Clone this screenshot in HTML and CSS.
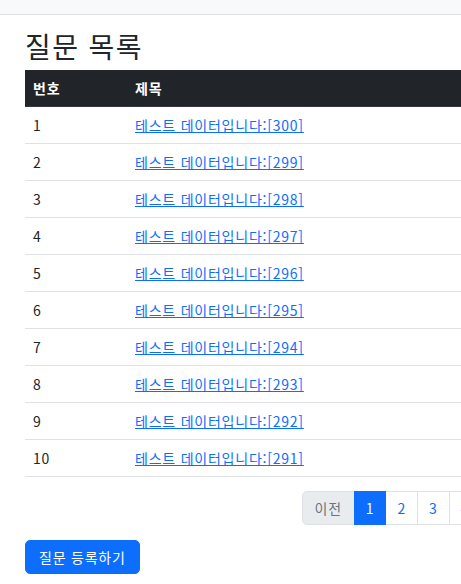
FILE: index.html
```html
<!DOCTYPE html>
<html lang="ko">
<head>
<meta charset="utf-8">
<title>질문 목록</title>
<link rel="stylesheet" href="styles.css">
</head>
<body>
<nav class="topbar"></nav>
<div class="container">
  <h2 class="title">질문 목록</h2>
  <table class="qtable">
    <thead>
      <tr><th class="col-no">번호</th><th class="col-subject">제목</th><th class="col-date">작성일시</th></tr>
    </thead>
    <tbody>
      <tr><td>1</td><td><a href="#">테스트 데이터입니다:[300]</a></td><td>2023-01-01</td></tr>
      <tr><td>2</td><td><a href="#">테스트 데이터입니다:[299]</a></td><td>2023-01-01</td></tr>
      <tr><td>3</td><td><a href="#">테스트 데이터입니다:[298]</a></td><td>2023-01-01</td></tr>
      <tr><td>4</td><td><a href="#">테스트 데이터입니다:[297]</a></td><td>2023-01-01</td></tr>
      <tr><td>5</td><td><a href="#">테스트 데이터입니다:[296]</a></td><td>2023-01-01</td></tr>
      <tr><td>6</td><td><a href="#">테스트 데이터입니다:[295]</a></td><td>2023-01-01</td></tr>
      <tr><td>7</td><td><a href="#">테스트 데이터입니다:[294]</a></td><td>2023-01-01</td></tr>
      <tr><td>8</td><td><a href="#">테스트 데이터입니다:[293]</a></td><td>2023-01-01</td></tr>
      <tr><td>9</td><td><a href="#">테스트 데이터입니다:[292]</a></td><td>2023-01-01</td></tr>
      <tr><td>10</td><td><a href="#">테스트 데이터입니다:[291]</a></td><td>2023-01-01</td></tr>
    </tbody>
  </table>
  <ul class="pagination">
    <li class="page-item disabled"><span class="page-link">이전</span></li>
    <li class="page-item active"><span class="page-link">1</span></li>
    <li class="page-item"><a class="page-link" href="#">2</a></li>
    <li class="page-item"><a class="page-link" href="#">3</a></li>
    <li class="page-item"><a class="page-link" href="#">4</a></li>
    <li class="page-item"><a class="page-link" href="#">5</a></li>
    <li class="page-item"><a class="page-link" href="#">6</a></li>
    <li class="page-item"><a class="page-link" href="#">다음</a></li>
  </ul>
  <a href="#" class="btn-primary">질문 등록하기</a>
</div>
</body>
</html>
```

FILE: styles.css
```css
html, body {
  overflow: hidden;
}
body {
  margin: 0;
  font-family: "Noto Sans CJK KR", "Noto Sans", sans-serif;
  font-size: 14px;
  line-height: 21px;
  letter-spacing: 0.055em;
  color: #212529;
  background: #fff;
}
.topbar {
  height: 14px;
  background: #f8f9fa;
  border-bottom: 1px solid #dee2e6;
}
.container {
  width: 846px;
  margin-left: 25px;
  padding-top: 14px;
}
.title {
  margin: 0 0 7px 0;
  font-size: 28px;
  line-height: 34px;
  font-weight: 400;
  letter-spacing: 0.05em;
}
.qtable {
  width: 100%;
  border-collapse: collapse;
  margin-bottom: 14px;
}
.qtable th, .qtable td {
  text-align: left;
  padding: 8px 8px;
  line-height: 20px;
  border-bottom: 1px solid #dee2e6;
}
.qtable thead th {
  background: #212529;
  color: #fff;
  font-weight: 700;
  border-bottom-color: #32383e;
}
.col-no { width: 86px; }
.col-date { width: 200px; }
.qtable a {
  color: #0d6efd;
  text-decoration: underline;
}
.pagination {
  list-style: none;
  display: flex;
  justify-content: center;
  margin: 0 0 15px 0;
  padding: 0;
}
.page-link {
  display: block;
  padding: 6px 11px;
  line-height: 20px;
  border: 1px solid #dee2e6;
  margin-left: -1px;
  color: #0d6efd;
  text-decoration: none;
  background: #fff;
}
.page-item:first-child .page-link {
  margin-left: 0;
  border-radius: 5px 0 0 5px;
}
.page-item:last-child .page-link {
  border-radius: 0 5px 5px 0;
}
.disabled .page-link {
  color: #6c757d;
  background: #e9ecef;
  padding: 6px 12px;
}
.active .page-link {
  background: #0d6efd;
  border-color: #0d6efd;
  color: #fff;
  position: relative;
  z-index: 1;
}
.btn-primary {
  display: inline-block;
  background: #0d6efd;
  color: #fff;
  border: 1px solid #0d6efd;
  border-radius: 5px;
  padding: 6px 13px;
  line-height: 20px;
  text-decoration: none;
}
```
